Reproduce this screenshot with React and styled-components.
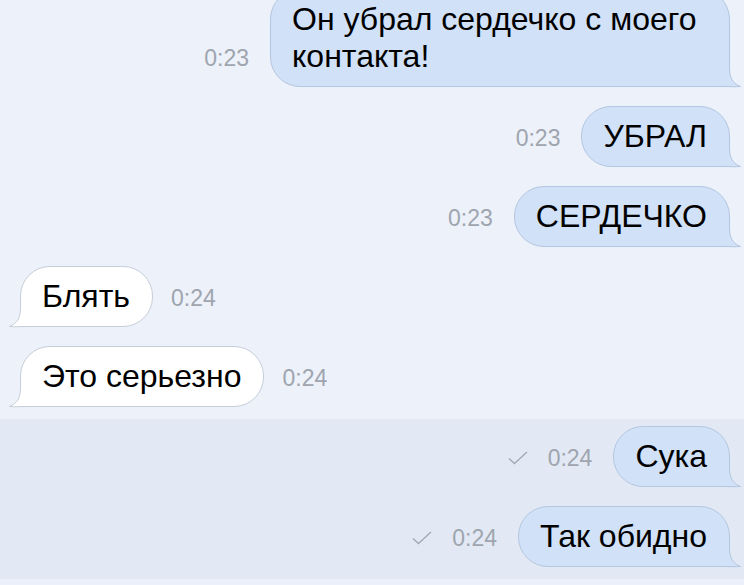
import React from "react";
import styled, { createGlobalStyle } from "styled-components";

const GlobalStyle = createGlobalStyle`
  html, body {
    margin: 0;
    padding: 0;
    background: #ebf0fa;
    overflow: hidden;
  }
  body {
    font-family: "Liberation Sans", Arial, sans-serif;
  }
`;

const Chat = styled.div`
  width: 744px;
  height: 585px;
  overflow: hidden;
  background: #ebf0fa;
`;

const List = styled.div`
  display: flex;
  flex-direction: column;
  margin-top: -18px;
  background: #edf1f9;
`;

const Unread = styled.div`
  display: flex;
  flex-direction: column;
  background: #e3e9f4;
`;

const Row = styled.div`
  display: flex;
  align-items: flex-end;
  justify-content: ${p => (p.$out ? "flex-end" : "flex-start")};
  padding: 7px ${p => (p.$out ? "14px" : "0")} 12px ${p => (p.$out ? "0" : "20px")};
  gap: ${p => (p.$out ? "21px" : "18px")};
`;

const Bubble = styled.div`
  position: relative;
  background: ${p => (p.$out ? "#d0e1f8" : "#ffffff")};
  border: 1px solid ${p => (p.$out ? "#b4c7e0" : "#c6ced9")};
  border-radius: 30px;
  ${p => (p.$out ? "border-bottom-right-radius: 0;" : "border-bottom-left-radius: 0;")}
  padding: 11px 22px 11px 21px;
  font-size: 32px;
  line-height: 37px;
  color: #000;
  max-width: 415px;
`;

const Tail = styled.svg`
  position: absolute;
  bottom: -1px;
  ${p => (p.$out ? "right: -12px;" : "left: -12px; transform: scaleX(-1);")}
  width: 24px;
  height: 20px;
  overflow: visible;
`;

const Meta = styled.div`
  display: flex;
  align-items: center;
  gap: 20px;
  margin-bottom: 16px;
  font-size: 23px;
  line-height: 26px;
  color: #9ea5af;
`;

const Check = styled.svg`
  width: 20px;
  height: 14px;
`;

const BubbleTail = ({ out }) => {
  const fill = out ? "#d0e1f8" : "#ffffff";
  const stroke = out ? "#b4c7e0" : "#c6ced9";
  return (
    <Tail $out={out} viewBox="0 0 24 20">
      <path
        d="M6 0 L12.5 0 C12.5 10 15 16 23.5 19.5 C18 20 13 19.5 6 19.5 Z"
        fill={fill}
      />
      <path
        d="M12.5 0 C12.5 10 15 16 23.5 19.5 C18 20 13 19.5 6 19.5"
        fill="none"
        stroke={stroke}
        strokeWidth="1"
      />
    </Tail>
  );
};

const Message = ({ out, text, time, read }) => {
  const meta = (
    <Meta>
      {read && (
        <Check viewBox="0 0 20 14">
          <path d="M1 7.5 L6.5 12.5 L19 1" fill="none" stroke="#a3aab4" strokeWidth="1.4" />
        </Check>
      )}
      <span>{time}</span>
    </Meta>
  );
  const bubble = (
    <Bubble $out={out}>
      {text}
      <BubbleTail out={out} />
    </Bubble>
  );
  return (
    <Row $out={out}>
      {out ? meta : bubble}
      {out ? bubble : meta}
    </Row>
  );
};

const messages = [
  { out: true, text: "Он убрал сердечко с моего контакта!", time: "0:23" },
  { out: true, text: "УБРАЛ", time: "0:23" },
  { out: true, text: "СЕРДЕЧКО", time: "0:23" },
  { out: false, text: "Блять", time: "0:24" },
  { out: false, text: "Это серьезно", time: "0:24" },
];

const unread = [
  { out: true, text: "Сука", time: "0:24", read: true },
  { out: true, text: "Так обидно", time: "0:24", read: true },
];

export default function App() {
  return (
    <Chat>
      <GlobalStyle />
      <List>
        {messages.map((m, i) => (
          <Message key={i} {...m} />
        ))}
        <Unread>
          {unread.map((m, i) => (
            <Message key={i} {...m} />
          ))}
        </Unread>
      </List>
    </Chat>
  );
}
